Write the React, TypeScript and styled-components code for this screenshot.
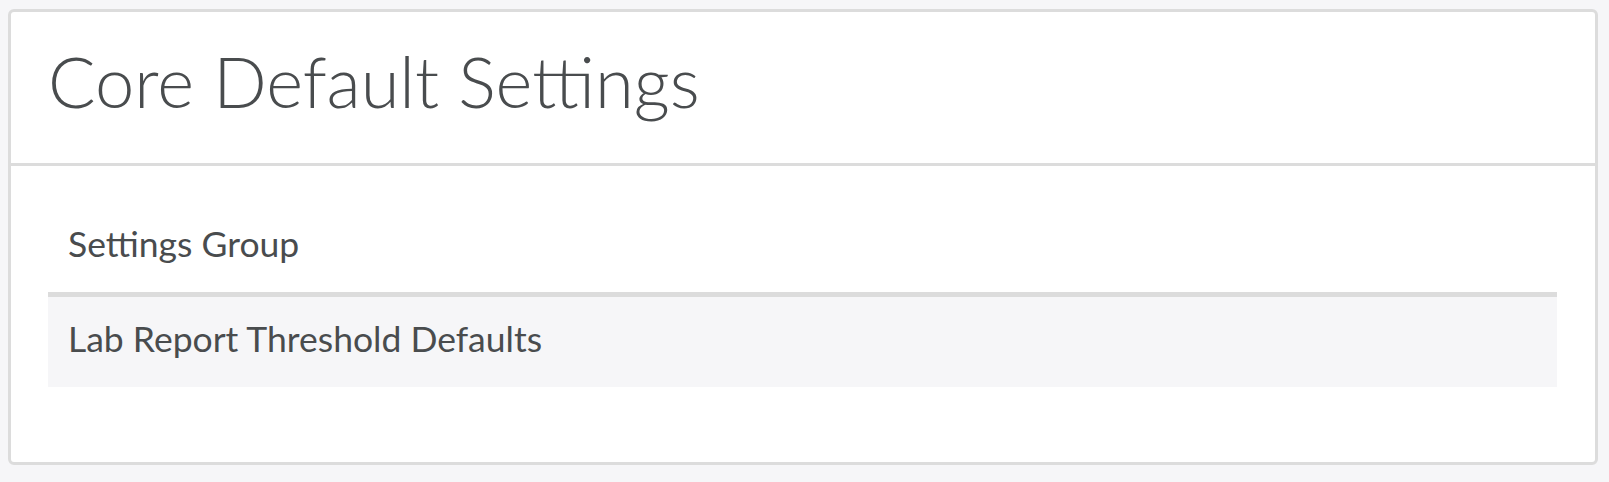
import React from "react";
import styled, { createGlobalStyle } from "styled-components";

const GlobalStyle = createGlobalStyle`
  html, body {
    margin: 0;
    padding: 0;
    background: #f6f6f8;
  }
  body {
    font-family: Lato, "Open Sans", "Liberation Sans", sans-serif;
    color: #494c4e;
  }
`;

const Page = styled.div`
  padding: 9px 11px 0 8px;
`;

const Card = styled.section`
  background: #fff;
  border: 3px solid #dcdcdc;
  border-radius: 6px;
`;

const CardHeader = styled.header`
  padding: 27px 37px 40px;
  border-bottom: 3px solid #dcdcdc;
  h1 {
    margin: 0;
    font-size: 70.5px;
    font-weight: 300;
    line-height: 84px;
    color: #494c4e;
  }
`;

const CardBody = styled.div`
  padding: 37px 38px 75px 37px;
`;

const Table = styled.table`
  width: 100%;
  border-collapse: collapse;
  border-spacing: 0;
`;

const HeadCell = styled.th`
  text-align: left;
  font-weight: 400;
  font-size: 35.5px;
  line-height: 42px;
  padding: 20px 20px 27px;
  border-bottom: 5px solid #dcdcdc;
`;

const Row = styled.tr<{ $shaded?: boolean }>`
  background: ${(p) => (p.$shaded ? "#f6f6f8" : "#fff")};
`;

const Cell = styled.td`
  font-size: 35.5px;
  line-height: 42px;
  padding: 21px 20px 27px;
`;

const groups = ["Lab Report Threshold Defaults"];

export default function App() {
  return (
    <Page>
      <GlobalStyle />
      <Card>
        <CardHeader>
          <h1>Core Default Settings</h1>
        </CardHeader>
        <CardBody>
          <Table>
            <thead>
              <tr>
                <HeadCell>Settings Group</HeadCell>
              </tr>
            </thead>
            <tbody>
              {groups.map((g) => (
                <Row key={g} $shaded>
                  <Cell>{g}</Cell>
                </Row>
              ))}
            </tbody>
          </Table>
        </CardBody>
      </Card>
    </Page>
  );
}
